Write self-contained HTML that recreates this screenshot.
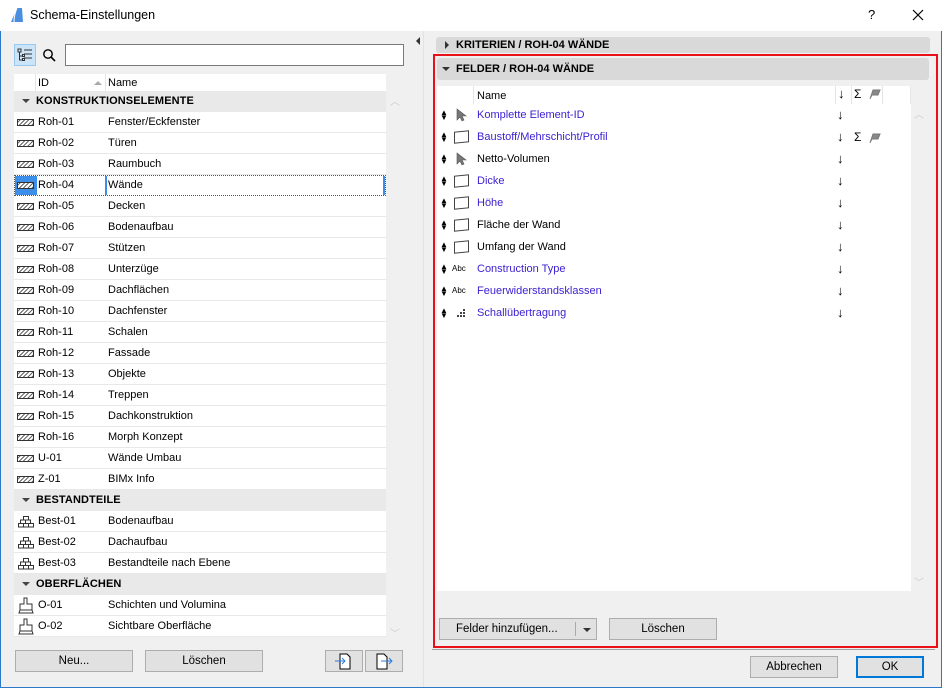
<!DOCTYPE html>
<html><head><meta charset="utf-8"><style>
*{box-sizing:border-box;margin:0;padding:0}
body{width:942px;height:688px;overflow:hidden;background:#f0f0f0;font-family:"Liberation Sans",sans-serif;font-size:11px;color:#000;position:relative}
.a{position:absolute}
.win{left:0;top:0;width:942px;height:688px;border:1px solid #2b79c8;border-top:none}
.title{left:0;top:0;width:942px;height:31px;background:#fff}
.row{position:absolute;left:14px;width:372px;height:21px;background:#fff;border-bottom:1px solid #e8e8e8}
.row .id{position:absolute;left:24px;top:4px}
.row .nm{position:absolute;left:94px;top:4px}
.grp{position:absolute;left:14px;width:372px;height:21px;background:#e9e9e9;font-weight:bold;letter-spacing:.1px}
.grp span{position:absolute;left:22px;top:4px}
.grp:before{content:"";position:absolute;left:8px;top:8px;border:4px solid transparent;border-top:4px solid #444;border-bottom:none}
.hatch{position:absolute;left:3px;top:7px;width:17px;height:7px;border:1px solid #333;background:repeating-linear-gradient(135deg,#fff 0 1px,#666 1px 2px,#fff 2px 3px)}
.btn{position:absolute;height:22px;background:#e1e1e1;border:1px solid #adadad;text-align:center;line-height:20px;font-size:11.5px}
.frow{position:absolute;left:437px;width:474px;height:22px}
.frow .t{position:absolute;left:40px;top:5px;font-size:11px}
.blue{color:#3a1fd0}
.ud{position:absolute;left:3px;top:6px;font-size:8px;line-height:5px}
.dn{position:absolute;left:400px;top:3px;font-size:13px}
.sh{position:absolute;left:17px;top:5px;width:15px;height:12px;border:1px solid #444;transform:skewY(-6deg)}
</style></head><body>
<div class="a win"></div>
<div class="a title"></div>
<svg class="a" style="left:9px;top:6px" width="15" height="17"><path d="M2 16 L8 2 L13 2 L14 16 Z" fill="#4a8ee0"/><path d="M8 2 Q5 9 5 16" stroke="#fff" fill="none"/></svg>
<div class="a" style="left:30px;top:8px;font-size:12.5px">Schema-Einstellungen</div>
<div class="a" style="left:868px;top:7px;font-size:13px">?</div>
<svg class="a" style="left:912px;top:9px" width="12" height="12"><path d="M1 1l10 10M11 1L1 11" stroke="#000" stroke-width="1.2"/></svg>

<!-- left toolbar -->
<div class="a" style="left:14px;top:44px;width:22px;height:22px;background:#cce4f7;border:1px solid #99c9ef"></div>
<svg class="a" style="left:17px;top:48px" width="16" height="14"><g stroke="#333" fill="none"><rect x="1" y="1" width="3" height="3"/><path d="M2.5 4v8h3M2.5 8h3M7 2h8M7 6h8M7 10h8"/><rect x="5.5" y="6.5" width="2" height="2"/><rect x="5.5" y="10.5" width="2" height="2"/></g></svg>
<svg class="a" style="left:42px;top:48px" width="14" height="14"><circle cx="6" cy="6" r="4.2" stroke="#000" stroke-width="1.4" fill="none"/><path d="M9 9l4 4" stroke="#000" stroke-width="1.6"/></svg>
<div class="a" style="left:65px;top:44px;width:339px;height:22px;background:#fff;border:1px solid #7a7a7a"></div>

<!-- list header -->
<div class="a" style="left:14px;top:74px;width:372px;height:17px;background:#fff"></div>
<div class="a" style="left:35px;top:74px;width:1px;height:17px;background:#e5e5e5"></div>
<div class="a" style="left:105px;top:74px;width:1px;height:17px;background:#e5e5e5"></div>
<div class="a" style="left:38px;top:77px">ID</div>
<div class="a" style="left:94px;top:81px;border:4px solid transparent;border-bottom:4px solid #aaa;border-top:none"></div>
<div class="a" style="left:108px;top:77px">Name</div>

<div class="grp" style="top:91px"><span>KONSTRUKTIONSELEMENTE</span></div>
<div class="row" style="top:112px"><div class="hatch"></div><span class="id">Roh-01</span><span class="nm">Fenster/Eckfenster</span></div>
<div class="row" style="top:133px"><div class="hatch"></div><span class="id">Roh-02</span><span class="nm">Türen</span></div>
<div class="row" style="top:154px"><div class="hatch"></div><span class="id">Roh-03</span><span class="nm">Raumbuch</span></div>
<div class="row" style="top:175px;border:1px dotted #555"><div class="a" style="left:0;top:0;width:22px;height:19px;background:#3d8ee8"></div><div class="hatch" style="left:2px;top:6px"></div><span class="id" style="top:3px;left:23px">Roh-04</span><div class="a" style="left:90px;top:0;width:2px;height:19px;background:#3d8ee8"></div><div class="a" style="left:368px;top:0;width:2px;height:19px;background:#3d8ee8"></div><span class="nm" style="top:3px;left:93px">Wände</span></div>
<div class="row" style="top:196px"><div class="hatch"></div><span class="id">Roh-05</span><span class="nm">Decken</span></div>
<div class="row" style="top:217px"><div class="hatch"></div><span class="id">Roh-06</span><span class="nm">Bodenaufbau</span></div>
<div class="row" style="top:238px"><div class="hatch"></div><span class="id">Roh-07</span><span class="nm">Stützen</span></div>
<div class="row" style="top:259px"><div class="hatch"></div><span class="id">Roh-08</span><span class="nm">Unterzüge</span></div>
<div class="row" style="top:280px"><div class="hatch"></div><span class="id">Roh-09</span><span class="nm">Dachflächen</span></div>
<div class="row" style="top:301px"><div class="hatch"></div><span class="id">Roh-10</span><span class="nm">Dachfenster</span></div>
<div class="row" style="top:322px"><div class="hatch"></div><span class="id">Roh-11</span><span class="nm">Schalen</span></div>
<div class="row" style="top:343px"><div class="hatch"></div><span class="id">Roh-12</span><span class="nm">Fassade</span></div>
<div class="row" style="top:364px"><div class="hatch"></div><span class="id">Roh-13</span><span class="nm">Objekte</span></div>
<div class="row" style="top:385px"><div class="hatch"></div><span class="id">Roh-14</span><span class="nm">Treppen</span></div>
<div class="row" style="top:406px"><div class="hatch"></div><span class="id">Roh-15</span><span class="nm">Dachkonstruktion</span></div>
<div class="row" style="top:427px"><div class="hatch"></div><span class="id">Roh-16</span><span class="nm">Morph Konzept</span></div>
<div class="row" style="top:448px"><div class="hatch"></div><span class="id">U-01</span><span class="nm">Wände Umbau</span></div>
<div class="row" style="top:469px"><div class="hatch"></div><span class="id">Z-01</span><span class="nm">BIMx Info</span></div>
<div class="grp" style="top:490px"><span>BESTANDTEILE</span></div>
<div class="row" style="top:511px"><svg class="a" style="left:3px;top:4px" width="18" height="13"><g stroke="#333" fill="none"><rect x="6.5" y="1.5" width="5" height="3.5"/><rect x="3.5" y="5" width="5" height="3.5"/><rect x="8.5" y="5" width="5" height="3.5"/><rect x="1.5" y="8.5" width="5" height="3.5"/><rect x="6.5" y="8.5" width="5" height="3.5"/><rect x="11.5" y="8.5" width="5" height="3.5"/></g></svg><span class="id">Best-01</span><span class="nm">Bodenaufbau</span></div>
<div class="row" style="top:532px"><svg class="a" style="left:3px;top:4px" width="18" height="13"><g stroke="#333" fill="none"><rect x="6.5" y="1.5" width="5" height="3.5"/><rect x="3.5" y="5" width="5" height="3.5"/><rect x="8.5" y="5" width="5" height="3.5"/><rect x="1.5" y="8.5" width="5" height="3.5"/><rect x="6.5" y="8.5" width="5" height="3.5"/><rect x="11.5" y="8.5" width="5" height="3.5"/></g></svg><span class="id">Best-02</span><span class="nm">Dachaufbau</span></div>
<div class="row" style="top:553px"><svg class="a" style="left:3px;top:4px" width="18" height="13"><g stroke="#333" fill="none"><rect x="6.5" y="1.5" width="5" height="3.5"/><rect x="3.5" y="5" width="5" height="3.5"/><rect x="8.5" y="5" width="5" height="3.5"/><rect x="1.5" y="8.5" width="5" height="3.5"/><rect x="6.5" y="8.5" width="5" height="3.5"/><rect x="11.5" y="8.5" width="5" height="3.5"/></g></svg><span class="id">Best-03</span><span class="nm">Bestandteile nach Ebene</span></div>
<div class="grp" style="top:574px"><span>OBERFLÄCHEN</span></div>
<div class="row" style="top:595px"><svg class="a" style="left:4px;top:2px" width="16" height="17"><path d="M6 1h3v6h5v6H2V7h4z M2 13l-1 3h14l-1-3" stroke="#333" fill="none"/></svg><span class="id">O-01</span><span class="nm">Schichten und Volumina</span></div>
<div class="row" style="top:616px"><svg class="a" style="left:4px;top:2px" width="16" height="17"><path d="M6 1h3v6h5v6H2V7h4z M2 13l-1 3h14l-1-3" stroke="#333" fill="none"/></svg><span class="id">O-02</span><span class="nm">Sichtbare Oberfläche</span></div>
<div class="a" style="left:390px;top:93px;color:#ccc;font-size:10px">︿</div>
<div class="a" style="left:390px;top:625px;color:#ccc;font-size:10px">﹀</div>

<div class="btn" style="left:15px;top:650px;width:118px">Neu...</div>
<div class="btn" style="left:145px;top:650px;width:118px">Löschen</div>
<div class="btn" style="left:325px;top:650px;width:38px"><svg width="20" height="18" style="margin-top:1px"><path d="M6 2h7l3 3v12H6z" stroke="#000" fill="#fff"/><path d="M1 9h10M8 6l3 3-3 3" stroke="#2a7de0" fill="none"/></svg></div>
<div class="btn" style="left:365px;top:650px;width:38px"><svg width="20" height="18" style="margin-top:1px"><path d="M3 2h7l3 3v12H3z" stroke="#000" fill="#fff"/><path d="M7 9h11M15 6l3 3-3 3" stroke="#2a7de0" fill="none"/></svg></div>

<!-- splitter -->
<div class="a" style="left:416px;top:37px;border:4px solid transparent;border-right:4px solid #333;border-left:none"></div>
<div class="a" style="left:423px;top:31px;width:1px;height:656px;background:#e3e3e3"></div>

<!-- right -->
<div class="a" style="left:436px;top:37px;width:494px;height:16px;background:#d9d9d9;border-radius:3px"></div>
<div class="a" style="left:445px;top:41px;border:4px solid transparent;border-left:4px solid #333;border-right:none"></div>
<div class="a" style="left:456px;top:39px;font-weight:bold">KRITERIEN / ROH-04 WÄNDE</div>
<div class="a" style="left:433px;top:54px;width:505px;height:594px;border:2px solid #e8111a"></div>
<div class="a" style="left:437px;top:58px;width:492px;height:22px;background:#d9d9d9;border-radius:3px"></div>
<div class="a" style="left:442px;top:67px;border:4px solid transparent;border-top:4px solid #333;border-bottom:none"></div>
<div class="a" style="left:456px;top:63px;font-weight:bold">FELDER / ROH-04 WÄNDE</div>

<div class="a" style="left:437px;top:86px;width:474px;height:505px;background:#fff"></div>
<div class="a" style="left:473px;top:86px;width:1px;height:18px;background:#e5e5e5"></div>
<div class="a" style="left:835px;top:86px;width:1px;height:18px;background:#e5e5e5"></div>
<div class="a" style="left:851px;top:86px;width:1px;height:18px;background:#e5e5e5"></div>
<div class="a" style="left:882px;top:86px;width:1px;height:18px;background:#e5e5e5"></div>
<div class="a" style="left:910px;top:86px;width:1px;height:18px;background:#e5e5e5"></div>
<div class="a" style="left:477px;top:90px">Name</div>
<div class="a" style="left:838px;top:86px;font-size:13px">↓</div>
<div class="a" style="left:854px;top:87px;font-size:12px">Σ</div>
<svg class="a" style="left:868px;top:88px" width="14" height="12"><path d="M2 11L5 2h7l-2 5H5" fill="#888" stroke="#777"/></svg>

<div class="frow" style="top:104px"><span class="ud">▲<br>▼</span><svg class="a" style="left:18px;top:4px" width="12" height="14"><path d="M2 1v11l3-3 2 4 2-1-2-4h4z" fill="#777" stroke="#555" stroke-width=".6"/></svg><span class="t blue">Komplette Element-ID</span><span class="dn">↓</span></div>
<div class="frow" style="top:126px"><span class="ud">▲<br>▼</span><div class="sh"></div><span class="t blue">Baustoff/Mehrschicht/Profil</span><span class="dn">↓</span><span class="a" style="left:417px;top:4px;font-size:12px">Σ</span><svg class="a" style="left:431px;top:6px" width="14" height="12"><path d="M2 11L5 2h7l-2 5H5" fill="#888" stroke="#777"/></svg></div>
<div class="frow" style="top:148px"><span class="ud">▲<br>▼</span><svg class="a" style="left:18px;top:4px" width="12" height="14"><path d="M2 1v11l3-3 2 4 2-1-2-4h4z" fill="#777" stroke="#555" stroke-width=".6"/></svg><span class="t">Netto-Volumen</span><span class="dn">↓</span></div>
<div class="frow" style="top:170px"><span class="ud">▲<br>▼</span><div class="sh"></div><span class="t blue">Dicke</span><span class="dn">↓</span></div>
<div class="frow" style="top:192px"><span class="ud">▲<br>▼</span><div class="sh"></div><span class="t blue">Höhe</span><span class="dn">↓</span></div>
<div class="frow" style="top:214px"><span class="ud">▲<br>▼</span><div class="sh"></div><span class="t">Fläche der Wand</span><span class="dn">↓</span></div>
<div class="frow" style="top:236px"><span class="ud">▲<br>▼</span><div class="sh"></div><span class="t">Umfang der Wand</span><span class="dn">↓</span></div>
<div class="frow" style="top:258px"><span class="ud">▲<br>▼</span><span class="a" style="left:15px;top:6px;font-size:8px">Abc</span><span class="t blue">Construction Type</span><span class="dn">↓</span></div>
<div class="frow" style="top:280px"><span class="ud">▲<br>▼</span><span class="a" style="left:15px;top:6px;font-size:8px">Abc</span><span class="t blue">Feuerwiderstandsklassen</span><span class="dn">↓</span></div>
<div class="frow" style="top:302px"><span class="ud">▲<br>▼</span><svg class="a" style="left:17px;top:6px" width="14" height="12"><g fill="#444"><rect x="9" y="1" width="2" height="2"/><rect x="6" y="4" width="2" height="2"/><rect x="9" y="4" width="2" height="2"/><rect x="3" y="7" width="2" height="2"/><rect x="6" y="7" width="2" height="2"/><rect x="9" y="7" width="2" height="2"/></g></svg><span class="t blue">Schallübertragung</span><span class="dn">↓</span></div>
<div class="a" style="left:914px;top:106px;color:#ccc;font-size:10px">︿</div>
<div class="a" style="left:914px;top:574px;color:#ccc;font-size:10px">﹀</div>

<div class="btn" style="left:439px;top:618px;width:158px;text-align:left;padding-left:16px">Felder hinzufügen...<span class="a" style="left:135px;top:3px;width:1px;height:14px;background:#aaa"></span><span class="a" style="left:143px;top:9px;border:4px solid transparent;border-top:4px solid #333;border-bottom:none"></span></div>
<div class="btn" style="left:609px;top:618px;width:108px">Löschen</div>
<div class="a" style="left:432px;top:649px;width:503px;height:1px;background:#a0a0a0"></div>
<div class="btn" style="left:750px;top:656px;width:88px">Abbrechen</div>
<div class="btn" style="left:856px;top:656px;width:68px;border:2px solid #0078d7;line-height:18px">OK</div>
</body></html>
